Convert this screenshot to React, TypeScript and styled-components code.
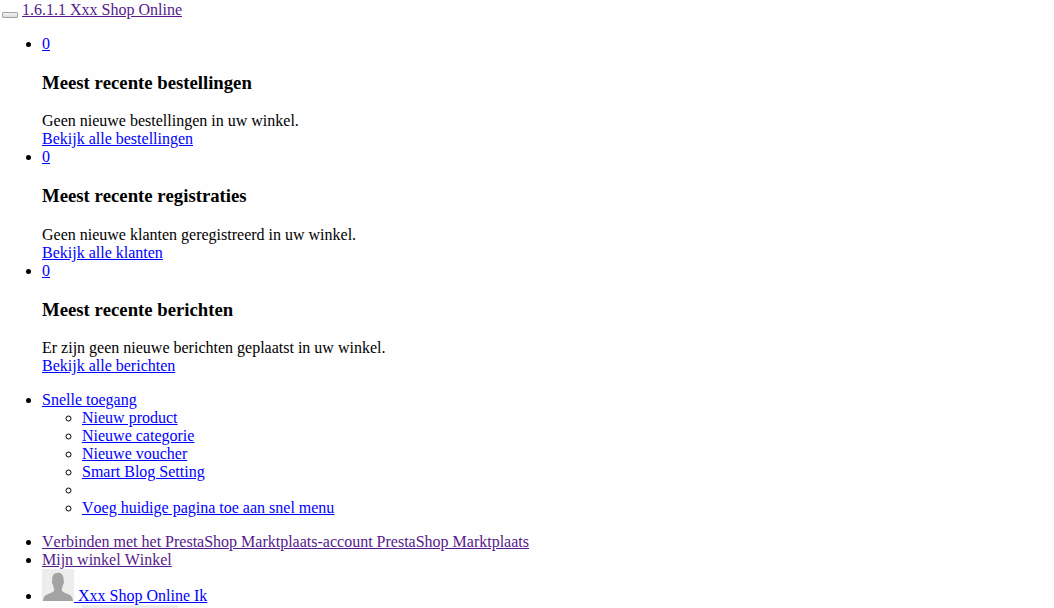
import React from 'react';
import styled, { createGlobalStyle } from 'styled-components';

const GlobalStyle = createGlobalStyle`
  html {
    overflow: hidden;
  }
  body {
    margin: 0;
    background-color: #fefefe;
    color: #000;
    font-family: 'Liberation Serif', 'Times New Roman', serif;
    font-size: 16px;
    line-height: 18px;
    font-kerning: none;
  }
`;

const Page = styled.div`
  height: 608px;
  box-sizing: border-box;
  padding: 1px 2px 0;
  overflow: hidden;
`;

const Header = styled.header`
  height: 18px;
  display: flex;
  gap: 4px;
`;

const MenuButton = styled.button`
  width: 16px;
  height: 6px;
  margin: 11px 0 0;
  padding: 0;
  border: 1px solid #a3a3a3;
  border-radius: 1px;
  background: linear-gradient(#f4f4f4, #dcdcdc);
`;

const Link = styled.a<{ $visited?: boolean }>`
  color: ${({ $visited }) => ($visited ? '#551a8b' : '#0000ff')};
  text-decoration: underline;
  cursor: pointer;
`;

const List = styled.ul`
  margin: 16px 0;
  padding: 0 0 0 40px;
  list-style-type: disc;
`;

const SubList = styled.ul`
  margin: 0;
  padding: 0 0 0 40px;
  list-style-type: circle;
`;

const Item = styled.li`
  min-height: 18px;
`;

const Title = styled.h3`
  margin: 18.72px 0;
  font-size: 18.72px;
  line-height: 22px;
  font-weight: bold;
`;

const Message = styled.div``;

const Avatar = styled.svg`
  width: 32px;
  height: 32px;
  vertical-align: baseline;
`;

const LargeAvatar = styled.div`
  width: 96px;
  height: 96px;
  background-color: #ededed;
`;

type Notification = {
  title: string;
  message: string;
  link: string;
};

const notifications: Notification[] = [
  {
    title: 'Meest recente bestellingen',
    message: 'Geen nieuwe bestellingen in uw winkel.',
    link: 'Bekijk alle bestellingen',
  },
  {
    title: 'Meest recente registraties',
    message: 'Geen nieuwe klanten geregistreerd in uw winkel.',
    link: 'Bekijk alle klanten',
  },
  {
    title: 'Meest recente berichten',
    message: 'Er zijn geen nieuwe berichten geplaatst in uw winkel.',
    link: 'Bekijk alle berichten',
  },
];

// the empty entry is the divider of the quick access menu
const quickLinks = [
  'Nieuw product',
  'Nieuwe categorie',
  'Nieuwe voucher',
  'Smart Blog Setting',
  '',
  'Voeg huidige pagina toe aan snel menu',
];

export default function App() {
  return (
    <>
      <GlobalStyle />
      <Page>
        <Header>
          <MenuButton />
          <Link $visited>1.6.1.1 Xxx Shop Online</Link>
        </Header>
        <List>
          {notifications.map((notification) => (
            <Item key={notification.title}>
              <Link>0</Link>
              <Title>{notification.title}</Title>
              <Message>{notification.message}</Message>
              <Link>{notification.link}</Link>
            </Item>
          ))}
        </List>
        <List>
          <Item>
            <Link>Snelle toegang</Link>
            <SubList>
              {quickLinks.map((label) => (
                <Item key={label}>{label && <Link>{label}</Link>}</Item>
              ))}
            </SubList>
          </Item>
        </List>
        <List>
          <Item>
            <Link $visited>Verbinden met het PrestaShop Marktplaats-account PrestaShop Marktplaats</Link>
          </Item>
          <Item>
            <Link $visited>Mijn winkel Winkel</Link>
          </Item>
          <Item>
            <Link>
              <Avatar viewBox="0 0 32 32">
                <rect width="32" height="32" fill="#ededed" />
                <path
                  d="M1 32C1.2 28.4 2.4 26.8 5.2 25.4C8.2 24 12 23.2 12.2 21.2C12.3 19.4 11.4 18.6 11 15.8C9.9 15.2 9.6 12.8 10.3 11.6C9.8 6.8 11.6 4.2 15 4C16.2 3 22.3 3.6 21.6 11.6C22.3 12.8 22 15.2 20.9 15.8C20.5 18.6 19.8 19.4 19.8 21.2C20 23.2 23.8 24 26.8 25.4C29.6 26.8 30.6 28.4 31 32Z"
                  fill="#a3a3a3"
                />
              </Avatar>{' '}
              Xxx Shop Online Ik
            </Link>
            <SubList>
              <Item>
                <LargeAvatar />
              </Item>
            </SubList>
          </Item>
        </List>
      </Page>
    </>
  );
}
